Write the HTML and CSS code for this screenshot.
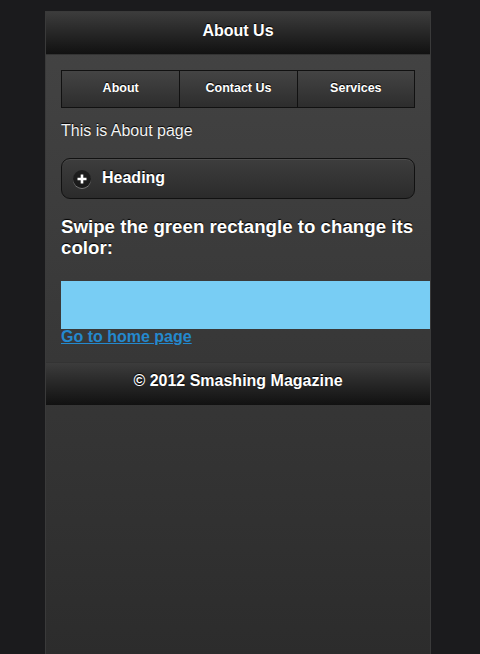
FILE: index.html
```html
<!DOCTYPE html>
<html lang="en">
<head>
<meta charset="utf-8">
<title>About Us</title>
<link rel="stylesheet" href="styles.css">
</head>
<body>
<div class="page">
  <header class="bar header"><h1>About Us</h1></header>
  <main class="content">
    <nav class="navbar">
      <a class="nav-btn">About</a>
      <a class="nav-btn">Contact Us</a>
      <a class="nav-btn">Services</a>
    </nav>
    <p class="intro">This is About page</p>
    <div class="collapsible">
      <span class="icon-plus"><svg width="12" height="12" viewBox="0 0 12 12"><path d="M6 1.5v9M1.5 6h9" stroke="#fff" stroke-width="2.6" stroke-linecap="butt"/></svg></span>
      <span class="coll-title">Heading</span>
    </div>
    <h3 class="swipe-title">Swipe the green rectangle to change its color:</h3>
    <div class="swipe-box"></div>
    <a class="home-link" href="#">Go to home page</a>
  </main>
  <footer class="bar footer"><h4>© 2012 Smashing Magazine</h4></footer>
</div>
</body>
</html>
```
FILE: styles.css
```css
html, body {
  margin: 0;
  padding: 0;
  height: 654px;
  overflow: hidden;
  background: #1b1b1d;
  font-family: "Liberation Sans", Arial, Helvetica, sans-serif;
}
.page {
  margin: 11px 0 0 45px;
  width: 384px;
  height: 643px;
  border: 1px solid #3a3a3a;
  border-bottom: none;
  background: linear-gradient(#444444, #2c2c2c);
}
.bar {
  box-sizing: border-box;
  background: linear-gradient(#3c3c3c, #111111);
  color: #fff;
  text-shadow: 0 -1px 1px #000;
  display: flex;
  align-items: center;
  justify-content: center;
  padding-bottom: 4px;
}
.header {
  height: 43px;
  border-bottom: 1px solid #333;
}
.header h1, .footer h4 {
  margin: 0;
  font-size: 16px;
  font-weight: bold;
  line-height: 18px;
}
.content {
  padding: 15px 15px 15px 15px;
  color: #fff;
}
.navbar {
  display: grid;
  grid-template-columns: 1fr 1fr 1fr;
  border: 1px solid #111;
  background: linear-gradient(#444444, #2d2d2d);
}
.nav-btn {
  box-sizing: border-box;
  height: 36px;
  padding-bottom: 2px;
  display: flex;
  align-items: center;
  justify-content: center;
  font-size: 12.5px;
  font-weight: bold;
  color: #fff;
  text-shadow: 0 -1px 1px #000;
  border-left: 1px solid #111;
}
.nav-btn:first-child { border-left: none; }
.intro {
  margin: 14px 0 0 0;
  font-size: 16px;
  line-height: 18px;
  color: #f2f2f2;
  text-shadow: 0 -1px 1px #000;
}
.collapsible {
  margin-top: 18px;
  height: 39px;
  border: 1px solid #111;
  border-radius: 9px;
  background: linear-gradient(#3d3d3d, #2b2b2b);
  display: flex;
  align-items: center;
  padding-left: 11px;
  gap: 11px;
  box-shadow: inset 0 1px 0 rgba(255,255,255,0.08);
}
.icon-plus {
  width: 18px;
  height: 18px;
  border-radius: 50%;
  background: rgba(0,0,0,0.45);
  box-shadow: 0 1px 0 rgba(255,255,255,0.35);
  display: flex;
  align-items: center;
  justify-content: center;
}
.coll-title {
  padding-bottom: 2px;
  font-size: 16px;
  font-weight: bold;
  color: #fff;
  text-shadow: 0 -1px 1px #000;
}
.swipe-title {
  margin: 17px 0 0 0;
  font-size: 18.7px;
  line-height: 21px;
  font-weight: bold;
  color: #fff;
  text-shadow: 0 -1px 1px #000;
}
.swipe-box {
  margin-top: 23px;
  width: 369px;
  height: 48px;
  background: #78cdf4;
}
.home-link {
  display: block;
  width: max-content;
  font-size: 16px;
  line-height: 16px;
  padding-bottom: 2px;
  font-weight: bold;
  color: #2489ce;
  text-decoration: underline;
}
.footer {
  height: 43px;
  border-top: 1px solid #333;
  padding-bottom: 6px;
}
```
